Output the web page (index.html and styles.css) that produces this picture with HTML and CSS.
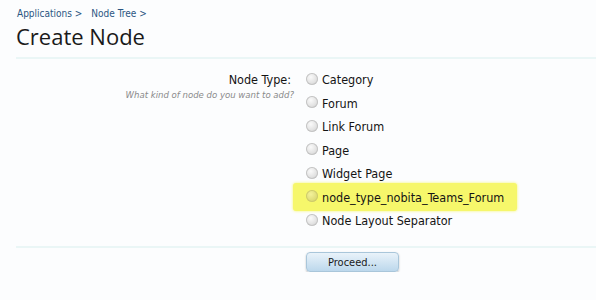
FILE: index.html
```html
<!DOCTYPE html>
<html>
<head>
<meta charset="utf-8">
<link rel="stylesheet" href="styles.css">
</head>
<body>
<div class="page">
  <nav class="crumbs">
    <a class="crumb">Applications &gt;</a>
    <a class="crumb">Node Tree &gt;</a>
  </nav>
  <h1 class="title">Create Node</h1>
  <form class="form">
    <div class="row">
      <div class="label">
        <div class="label-main">Node Type:</div>
        <div class="hint">What kind of node do you want to add?</div>
      </div>
      <ul class="options">
        <li class="opt"><span class="radio"></span>Category</li>
        <li class="opt"><span class="radio"></span>Forum</li>
        <li class="opt"><span class="radio"></span>Link Forum</li>
        <li class="opt"><span class="radio"></span>Page</li>
        <li class="opt"><span class="radio"></span>Widget Page</li>
        <li class="opt hl"><span class="radio"></span>node_type_nobita_Teams_Forum</li>
        <li class="opt"><span class="radio"></span>Node Layout Separator</li>
      </ul>
    </div>
    <div class="submit">
      <button type="button" class="btn">Proceed...</button>
    </div>
  </form>
</div>
</body>
</html>
```
FILE: styles.css
```css
html, body {
  margin: 0;
  padding: 0;
  background: #fcfdfe;
}
.page {
  font-family: "DejaVu Sans Condensed", "DejaVu Sans", Verdana, sans-serif;
  font-stretch: condensed;
  color: #141414;
  padding: 6px 0 0 16px;
}
.crumbs {
  display: flex;
  gap: 9px;
  font-size: 10px;
  height: 15px;
  line-height: 15px;
  padding-left: 1px;
}
.crumb {
  color: #2b5582;
}
.title {
  font-family: "Open Sans", sans-serif;
  font-stretch: normal;
  font-weight: normal;
  font-size: 22px;
  line-height: 30px;
  margin: 0;
  color: #1a1a1a;
  padding-bottom: 6px;
  border-bottom: 2px solid #eaf6f6;
}
.form {
  padding-top: 9px;
}
.row {
  display: flex;
}
.label {
  width: 276px;
  text-align: right;
  padding-right: 0;
  padding-top: 4px;
  box-sizing: border-box;
}
.label-main {
  font-size: 12.5px;
  line-height: 16px;
  padding-right: 1px;
}
.hint {
  font-size: 9.5px;
  font-style: italic;
  color: #8a8a8a;
  line-height: 14px;
  margin-right: -2px;
}
.options {
  list-style: none;
  margin: 0;
  padding: 0;
}
.opt {
  display: flex;
  align-items: center;
  height: 23.5px;
  font-size: 12.5px;
  padding-left: 14px;
}
.radio {
  width: 12px;
  height: 12px;
  border-radius: 50%;
  margin-right: 4px;
  margin-top: -2px;
  background: radial-gradient(circle at 40% 35%, #fafafa 0%, #e2e2e2 55%, #c6c6c6 100%);
  box-shadow: inset 0 0 0 1px #c4c4c4;
}
.hl {
  box-sizing: border-box;
  background: #f6f76b;
  width: 224px;
  margin: -2.25px 0 -2.25px 1px;
  padding-left: 13px;
  height: 28px;
  border-radius: 3px;
  box-shadow: 0 0 3px #f6f76b;
}
.hl .radio {
  background: radial-gradient(circle at 40% 35%, #f4f29a 0%, #dedc78 60%, #c8c45e 100%);
  box-shadow: inset 0 0 0 1px #cfcc6a;
}
.submit {
  margin-top: 13px;
  border-top: 2px solid #eaf6f6;
  padding: 3px 0 0 290px;
}
.btn {
  font-family: "DejaVu Sans Condensed", "DejaVu Sans", Verdana, sans-serif;
  font-stretch: condensed;
  font-size: 11px;
  color: #1a1a1a;
  width: 93px;
  height: 20px;
  border: 1px solid #a9c6da;
  border-radius: 4px;
  background: linear-gradient(#e9f3fa, #bcd8ec);
  box-shadow: 0 1px 2px rgba(0,0,0,0.25);
  padding: 0;
}
```
